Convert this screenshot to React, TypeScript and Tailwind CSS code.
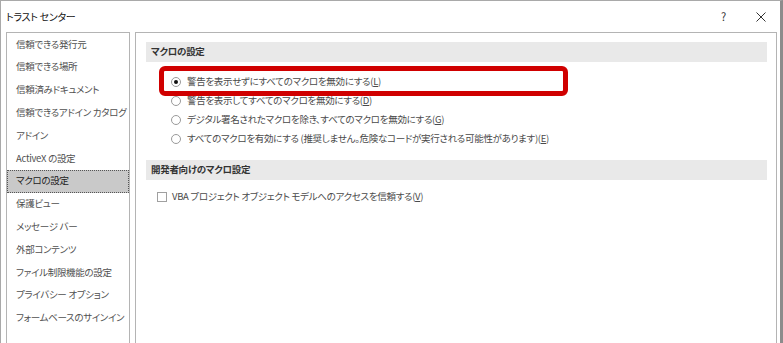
import { ReactNode } from "react";

const navItems = [
  "信頼できる発行元",
  "信頼できる場所",
  "信頼済みドキュメント",
  "信頼できるアドイン カタログ",
  "アドイン",
  "ActiveX の設定",
  "マクロの設定",
  "保護ビュー",
  "メッセージ バー",
  "外部コンテンツ",
  "ファイル制限機能の設定",
  "プライバシー オプション",
  "フォームベースのサインイン",
];

function Key({ k }: { k: string }) {
  return (
    <>
      (<span className="underline underline-offset-1">{k}</span>)
    </>
  );
}

function RadioRow({ checked, children }: { checked?: boolean; children: ReactNode }) {
  return (
    <div className="flex h-[19px] items-center pl-[25px]">
      <span className="flex size-[10px] shrink-0 items-center justify-center rounded-full border border-[#9a9a9a] bg-white">
        {checked && <span className="size-[4px] rounded-full bg-[#111]" />}
      </span>
      <span className="ml-[6px] whitespace-nowrap text-[#4a4a4a]">{children}</span>
    </div>
  );
}

function SectionHeader({ children }: { children: ReactNode }) {
  return (
    <div className="flex h-[20px] items-center bg-[#e9e9e9] pl-[5px] font-bold text-[#333]">
      {children}
    </div>
  );
}

export default function App() {
  return (
    <div
      className="flex h-[343px] w-[783px] flex-col border-l border-t border-r-[3px] border-l-[#a9a9a9] border-t-[#a9a9a9] border-r-[#8c8c8c] bg-white text-[9.5px] leading-none tracking-[-0.3px]"
      style={{ fontFamily: '"Noto Sans CJK JP", "Noto Sans", sans-serif', fontFeatureSettings: '"palt"' }}
    >
      <div className="flex h-[31px] shrink-0 items-center pl-[5px] pr-[14px]">
        <span className="text-[10px] text-[#111]">トラスト センター</span>
        <span className="ml-auto text-[11px] text-[#333]">?</span>
        <svg className="ml-[30px]" width="10" height="10" viewBox="0 0 10 10">
          <path d="M0.5 0.5 L9.5 9.5 M9.5 0.5 L0.5 9.5" stroke="#333" strokeWidth="1" />
        </svg>
      </div>

      <div className="flex min-h-0 flex-1 gap-[5px] pl-[5px] pr-[3px]">
        <div className="w-[124px] shrink-0 overflow-hidden border border-b-0 border-[#b4b4b4] text-[#505050]">
          {navItems.map((item) => (
            <div
              key={item}
              className={
                item === "マクロの設定"
                  ? "flex h-[22.8px] items-center whitespace-nowrap border border-dotted border-[#555] bg-[#c9c9c9] pl-[8px] text-[#222]"
                  : "flex h-[22.8px] items-center whitespace-nowrap pl-[9px]"
              }
            >
              {item}
            </div>
          ))}
        </div>

        <div className="relative w-[642px] shrink-0 border border-b-0 border-[#b4b4b4] pl-[10px] pr-[9px] pt-[9px]">
          <SectionHeader>マクロの設定</SectionHeader>
          <div className="mt-[10px]">
            <RadioRow checked>
              警告を表示せずにすべてのマクロを無効にする<Key k="L" />
            </RadioRow>
            <RadioRow>
              警告を表示してすべてのマクロを無効にする<Key k="D" />
            </RadioRow>
            <RadioRow>
              デジタル署名されたマクロを除き、すべてのマクロを無効にする<Key k="G" />
            </RadioRow>
            <RadioRow>
              すべてのマクロを有効にする (推奨しません。危険なコードが実行される可能性があります)<Key k="E" />
            </RadioRow>
          </div>

          <div className="mt-[12px]">
            <SectionHeader>開発者向けのマクロ設定</SectionHeader>
          </div>
          <div className="mt-[7px] flex h-[19px] items-center pl-[11px]">
            <span className="size-[10px] shrink-0 border border-[#a0a0a0] bg-white" />
            <span className="ml-[5px] whitespace-nowrap text-[#4a4a4a]">
              VBA プロジェクト オブジェクト モデルへのアクセスを信頼する<Key k="V" />
            </span>
          </div>

          <div className="absolute left-[23px] top-[33px] h-[30px] w-[409px] rounded-[6px] border-[5px] border-[#d00000]" />
        </div>
      </div>
    </div>
  );
}
